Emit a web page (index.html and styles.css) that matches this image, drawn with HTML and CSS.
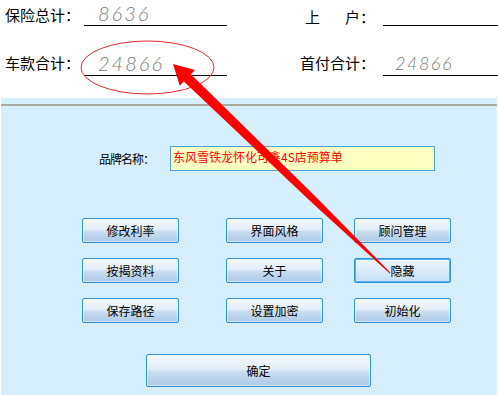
FILE: index.html
```html
<!DOCTYPE html>
<html lang="zh-CN">
<head>
    <meta charset="UTF-8">
    <title>预算单</title>
    <link rel="stylesheet" href="styles.css">
</head>
<body>
    <div class="summary">
        <div class="sum-row first">
            <div class="sum-cell left">
                <span class="sum-label">保险总计：</span>
                <span class="sum-value big">8636</span>
            </div>
            <div class="sum-cell right">
                <span class="sum-label"><span class="spread">上</span>户：</span>
                <span class="sum-value"></span>
            </div>
        </div>
        <div class="sum-row second">
            <div class="sum-cell left">
                <span class="sum-label">车款合计：</span>
                <span class="sum-value big">24866</span>
            </div>
            <div class="sum-cell right">
                <span class="sum-label">首付合计：</span>
                <span class="sum-value">24866</span>
            </div>
        </div>
    </div>

    <div class="panel">
        <div class="rule"></div>
        <div class="brand-row">
            <span class="brand-label">品牌名称：</span>
            <div class="brand-input">东风雪铁龙怀化可鑫4S店预算单</div>
        </div>
        <div class="btn-grid">
            <button class="btn">修改利率</button>
            <button class="btn">界面风格</button>
            <button class="btn">顾问管理</button>
            <button class="btn">按揭资料</button>
            <button class="btn">关于</button>
            <button class="btn btn-focus">隐藏</button>
            <button class="btn">保存路径</button>
            <button class="btn">设置加密</button>
            <button class="btn">初始化</button>
        </div>
        <div class="ok-row">
            <button class="btn btn-ok">确定</button>
        </div>
    </div>

    <!-- annotation drawn over the form -->
    <svg class="markup" width="498" height="395" viewBox="0 0 498 395">
        <ellipse cx="147.5" cy="67.5" rx="66.5" ry="26.5" fill="none" stroke="#e8262a" stroke-width="1"/>
        <polygon fill="#ff0000" points="173,64 195,70 190.9,74.3 316.5,197.5 390.3,272.6 389.7,273.4 311.7,202.5 183.9,81.5 179.8,85.8"/>
    </svg>
</body>
</html>
```

FILE: styles.css
```css
body {
    margin: 0;
    background-color: #fff;
    font-family: "Noto Sans CJK SC", "DejaVu Sans", sans-serif;
    color: #000;
    position: relative;
    width: 498px;
    height: 395px;
    overflow: hidden;
}
.summary {
    height: 98px;
}
.sum-row {
    display: flex;
    height: 26px;
}
.sum-row.second {
    margin-top: 24px;
}
.sum-cell {
    display: flex;
    align-items: stretch;
}
.sum-cell.left {
    width: 227px;
    padding-left: 5px;
    box-sizing: border-box;
}
.sum-cell.right {
    flex: 1;
}
.sum-label {
    font-size: 15px;
    line-height: 26px;
    white-space: nowrap;
}
.first .sum-label {
    line-height: 30px;
}
.first .right .sum-label {
    line-height: 33px;
}
.left .sum-label {
    width: 79px;
}
.right .sum-label {
    width: 148px;
    text-align: right;
    margin-right: 8px;
}
.spread {
    margin-right: 25px;
}
.sum-value {
    flex: 1;
    border-bottom: 1px solid #000;
    font-family: Lato, "DejaVu Sans", sans-serif;
    font-weight: 300;
    font-style: italic;
    color: #7c7c7c;
    font-size: 18px;
    line-height: 26px;
    padding-left: 12px;
    letter-spacing: 1.5px;
}
.sum-value.big {
    font-size: 20px;
    padding-left: 14px;
    letter-spacing: 2px;
}
.panel {
    margin: 0 1px;
    height: 297px;
    background-color: #d5effc;
    padding-top: 6px;
    box-sizing: border-box;
}
.rule {
    height: 2px;
    background-color: #aba99c;
}
.brand-row {
    display: flex;
    align-items: center;
    margin-top: 40px;
    padding-left: 98px;
}
.brand-label {
    width: 71px;
    font-size: 12px;
    letter-spacing: -1px;
}
.brand-input {
    width: 265px;
    height: 25px;
    box-sizing: border-box;
    border: 1px solid #4ea5de;
    background-color: #ffffc2;
    color: #ff0000;
    font-size: 12px;
    line-height: 14px;
    padding: 3px 2px 0;
}
.btn-grid {
    display: grid;
    grid-template-columns: 144px 128px 97px;
    grid-auto-rows: 25px;
    row-gap: 15px;
    margin-top: 47px;
    padding-left: 81px;
}
.btn {
    width: 97px;
    height: 25px;
    padding: 0;
    border: 1px solid #2b93db;
    border-radius: 2px;
    background: linear-gradient(#f6fafd, #e2edf7 45%, #c9ddf0 55%, #adcae7);
    box-shadow: inset 0 0 0 1px rgba(255, 255, 255, 0.5);
    font-family: "Noto Sans CJK SC", sans-serif;
    font-size: 12px;
    color: #000;
}
.btn-focus {
    border-color: #2a92dc;
    box-shadow: inset 0 0 0 1px #5db3ec;
    background: linear-gradient(#eef7fe, #dcecf9 50%, #c4def3);
}
.ok-row {
    margin-top: 31px;
    padding-left: 145px;
}
.btn-ok {
    width: 225px;
    height: 33px;
}
.markup {
    position: absolute;
    top: 0;
    left: 0;
    pointer-events: none;
}
```
